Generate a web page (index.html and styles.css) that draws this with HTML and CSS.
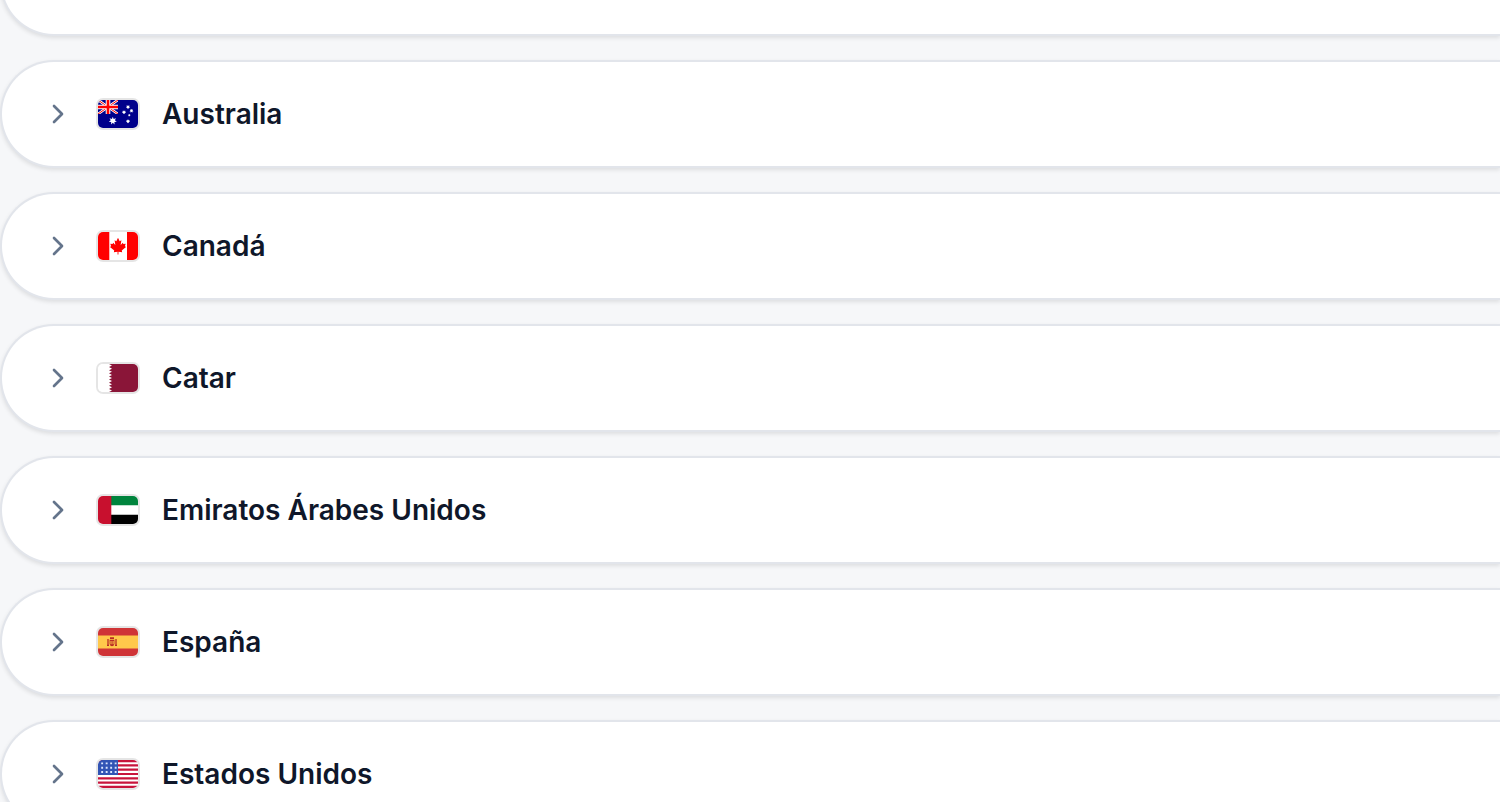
FILE: index.html
```html
<!DOCTYPE html>
<html lang="es">
<head>
<meta charset="utf-8">
<title>Países</title>
<link rel="stylesheet" href="styles.css">
</head>
<body>
<svg class="defs" width="0" height="0"><defs>
<symbol id="chevron" viewBox="0 0 24 24"><path d="m9 18 6-6-6-6" fill="none" stroke="currentColor" stroke-width="2" stroke-linecap="round" stroke-linejoin="round"/></symbol>
<path id="star" d="M0-3.8 .8-1.7 3-2.4 1.9-.4 3.7.9 1.5 1.2 1.6 3.4 0 1.9-1.6 3.4-1.5 1.2-3.7.9-1.9-.4-3-2.4-.8-1.7Z"/>
</defs></svg>
<main class="list">
<div class="card"></div>
<div class="card">
<svg class="chevron"><use href="#chevron"/></svg>
<svg class="flag" viewBox="0 0 40 28"><path fill="#00008b" d="M0 0h40v28H0z"/>
<path d="m0 0 20 14M20 0 0 14" stroke="#fff" stroke-width="2.6"/><path d="m0 0 20 14M20 0 0 14" stroke="#f00" stroke-width="1"/>
<path d="M10 0v14M0 7h20" stroke="#fff" stroke-width="4.6"/><path d="M10 0v14M0 7h20" stroke="#f00" stroke-width="2.6"/><path fill="#00008b" d="M0 14h22v3H0zM20 0h2v14h-2z"/>
<g fill="#fff"><use href="#star" transform="translate(14.8 20.8) scale(1.08)"/><use href="#star" transform="translate(30 7) scale(.58)"/><use href="#star" transform="translate(26 12.2) scale(.58)"/><use href="#star" transform="translate(33.5 10.8) scale(.55)"/><use href="#star" transform="translate(30 21.3) scale(.58)"/><use href="#star" transform="translate(31.3 15.2) scale(.36)"/></g></svg>
<span class="name">Australia</span></div>
<div class="card">
<svg class="chevron"><use href="#chevron"/></svg>
<svg class="flag" viewBox="0 0 40 28"><path fill="#fff" d="M0 0h40v28H0z"/><path fill="#f00" d="M0 0h11.3v28H0zM29 0h11v28H29z"/><path fill="#f00" transform="translate(20 14) scale(1.1 1.2) translate(-20 -13.4)" d="M20 6.6l1.5 2.8 1.6-.8-.7 3.9 2-1.9.5 1.2 2.1-.3-.7 2.1 1 .6-3.9 3 .4 1.4-3.4-.5v2.4h-.8v-2.4l-3.4.5.4-1.4-3.9-3 1-.6-.7-2.1 2.1.3.5-1.2 2 1.9-.7-3.9 1.6.8Z"/></svg>
<span class="name">Canadá</span></div>
<div class="card">
<svg class="chevron"><use href="#chevron"/></svg>
<svg class="flag" viewBox="0 0 40 28"><path fill="#fff" d="M0 0h40v28H0z"/><path fill="#8a1538" d="M40 0H11l3 1.56-3 1.55 3 1.56-3 1.55 3 1.56-3 1.55 3 1.56-3 1.55 3 1.56-3 1.55 3 1.56-3 1.55 3 1.56-3 1.55 3 1.56-3 1.55 3 1.56L11 28h29Z"/></svg>
<span class="name">Catar</span></div>
<div class="card">
<svg class="chevron"><use href="#chevron"/></svg>
<svg class="flag" viewBox="0 0 40 28"><path fill="#fff" d="M0 0h40v28H0z"/><path fill="#00843d" d="M13 0h27v9.3H13z"/><path d="M13 18.7h27V28H13z"/><path fill="#c8102e" d="M0 0h13.3v28H0z"/></svg>
<span class="name">Emiratos Árabes Unidos</span></div>
<div class="card">
<svg class="chevron"><use href="#chevron"/></svg>
<svg class="flag" viewBox="0 0 40 28"><path fill="#cf3437" d="M0 0h40v28H0z"/><path fill="#ffc84b" d="M0 7.5h40v13H0z"/><path d="M10 11v6.5M18 11v6.5" stroke="#b92b25" stroke-width="1.3"/><path fill="#b92b25" d="M12 9.3h4v1.8h-4zM11.6 11.8h4.8v4q0 2.4-2.4 2.4t-2.4-2.4zM9 16.8h2v1.3H9zM17 16.8h2v1.3h-2z"/><path fill="#ffc84b" d="M12.5 13h1v3.2h-1zM14.6 13h1v3.2h-1z"/></svg>
<span class="name">España</span></div>
<div class="card">
<svg class="chevron"><use href="#chevron"/></svg>
<svg class="flag" viewBox="0 0 40 28"><path fill="#fff" d="M0 0h40v28H0z"/><path d="M0 1.08h40M0 5.38h40M0 9.69h40M0 14h40M0 18.31h40M0 22.62h40M0 26.92h40" stroke="#c8143c" stroke-width="2.15"/><path fill="#3154b5" d="M0 0h20v15H0z"/><path d="M3.2 3.4h16M3.2 7.7h16M3.2 12h16" stroke="#dce6ff" stroke-width="1.9" stroke-dasharray="1.9 2.6"/></svg>
<span class="name">Estados Unidos</span></div>
</main>
</body>
</html>
```
FILE: styles.css
```css
body {
  margin: 0;
  height: 802px;
  overflow: hidden;
  background: #f6f7f9;
  font-family: Inter, "Liberation Sans", sans-serif;
}

.defs {
  display: block;
}

.list {
  display: flex;
  flex-direction: column;
  gap: 24px;
  margin-top: -72px;
}

.card {
  box-sizing: border-box;
  display: flex;
  align-items: center;
  gap: 24px;
  height: 108px;
  flex-shrink: 0;
  padding: 0 40px;
  border: 2px solid #e2e5eb;
  border-right: 0;
  border-radius: 54px 0 0 54px;
  background: #fff;
  box-shadow: 0 2px 4px rgba(0, 0, 0, 0.1);
}

.chevron {
  width: 32px;
  height: 32px;
  color: #64748b;
}

.flag {
  width: 40px;
  height: 28px;
  border-radius: 5px;
  box-shadow: 0 0 0 2px rgba(0, 0, 0, 0.1);
}

.name {
  color: #0f172a;
  font-size: 28px;
  font-weight: 600;
  line-height: 40px;
}
```
